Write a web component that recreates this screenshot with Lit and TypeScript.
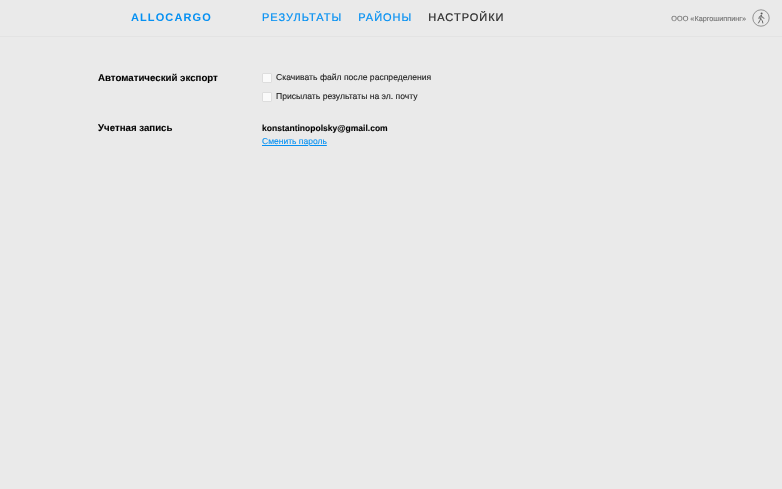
import { LitElement, html, css } from "lit";
import { customElement } from "lit/decorators.js";

@customElement("app-root")
export class AppRoot extends LitElement {
  static styles = css`
    :host {
      display: block;
      width: 782px;
      height: 489px;
      background: #eaeaea;
      font-family: "Liberation Sans", Arial, sans-serif;
      color: #000;
      overflow: hidden;
      text-rendering: geometricPrecision;
    }
    header {
      height: 37px;
      box-sizing: border-box;
      border-bottom: 1px solid #e3e3e3;
      display: flex;
      align-items: center;
      padding: 0 12px 0 131px;
      will-change: transform;
    }
    .logo {
      width: 131px;
      font-size: 11px;
      font-weight: bold;
      letter-spacing: 1.1px;
      color: #0590f2;
    }
    nav {
      display: flex;
      gap: 16px;
      font-size: 11px;
      letter-spacing: 1px;
      -webkit-text-stroke: 0.2px;
    }
    nav a { color: #0590f2; }
    nav a.current { color: #2a2a2a; }
    .account {
      margin-left: auto;
      display: flex;
      align-items: center;
      gap: 6px;
      font-size: 7.3px;
      color: #6f6f6f;
      -webkit-text-stroke: 0.1px;
    }
    .account svg { display: block; }
    main {
      padding: 35px 0 0 98px;
      display: flex;
      flex-direction: column;
      gap: 20px;
      will-change: transform;
      -webkit-text-stroke: 0.1px;
    }
    .row { display: flex; }
    .label {
      width: 164px;
      font-size: 9.7px;
      font-weight: bold;
      line-height: 13px;
    }
    .checks { display: flex; flex-direction: column; gap: 8px; }
    .check {
      display: flex;
      align-items: center;
      gap: 4px;
      font-size: 8.6px;
      line-height: 11px;
      color: #1a1a1a;
    }
    .box {
      box-sizing: border-box;
      width: 10px;
      height: 10px;
      background: #fafafa;
      border: 1px solid #ddd;
      border-radius: 1px;
    }
    .email { font-size: 8.53px; font-weight: bold; line-height: 12px; }
    .change {
      display: block;
      font-size: 8.5px;
      line-height: 14px;
      color: #0590f2;
      text-decoration: underline;
    }
  `;

  render() {
    return html`
      <header>
        <div class="logo">ALLOCARGO</div>
        <nav>
          <a>РЕЗУЛЬТАТЫ</a>
          <a>РАЙОНЫ</a>
          <a class="current">НАСТРОЙКИ</a>
        </nav>
        <div class="account">
          <span>ООО «Каргошиппинг»</span>
          <svg width="18" height="18" viewBox="0 0 18 18" fill="none" stroke="#666">
            <circle cx="9" cy="9" r="8.2" stroke="#888" stroke-width="0.9" />
            <circle cx="9.6" cy="4.6" r="1" fill="#555" stroke="none" />
            <path d="M9.3 6.5 8.6 10 10.3 11.6 10.8 14M8.6 10 7.7 11.8 6.5 14M9.3 6.5 7.3 7.8 7 9.6M9.3 6.5 10.6 8.6 12 9.2" stroke-width="1" stroke-linecap="round" stroke-linejoin="round" />
          </svg>
        </div>
      </header>
      <main>
        <section class="row">
          <div class="label">Автоматический экспорт</div>
          <div class="checks">
            <label class="check"><span class="box"></span>Скачивать файл после распределения</label>
            <label class="check"><span class="box"></span>Присылать результаты на эл. почту</label>
          </div>
        </section>
        <section class="row">
          <div class="label">Учетная запись</div>
          <div>
            <div class="email">konstantinopolsky@gmail.com</div>
            <a class="change">Сменить пароль</a>
          </div>
        </section>
      </main>
    `;
  }
}
